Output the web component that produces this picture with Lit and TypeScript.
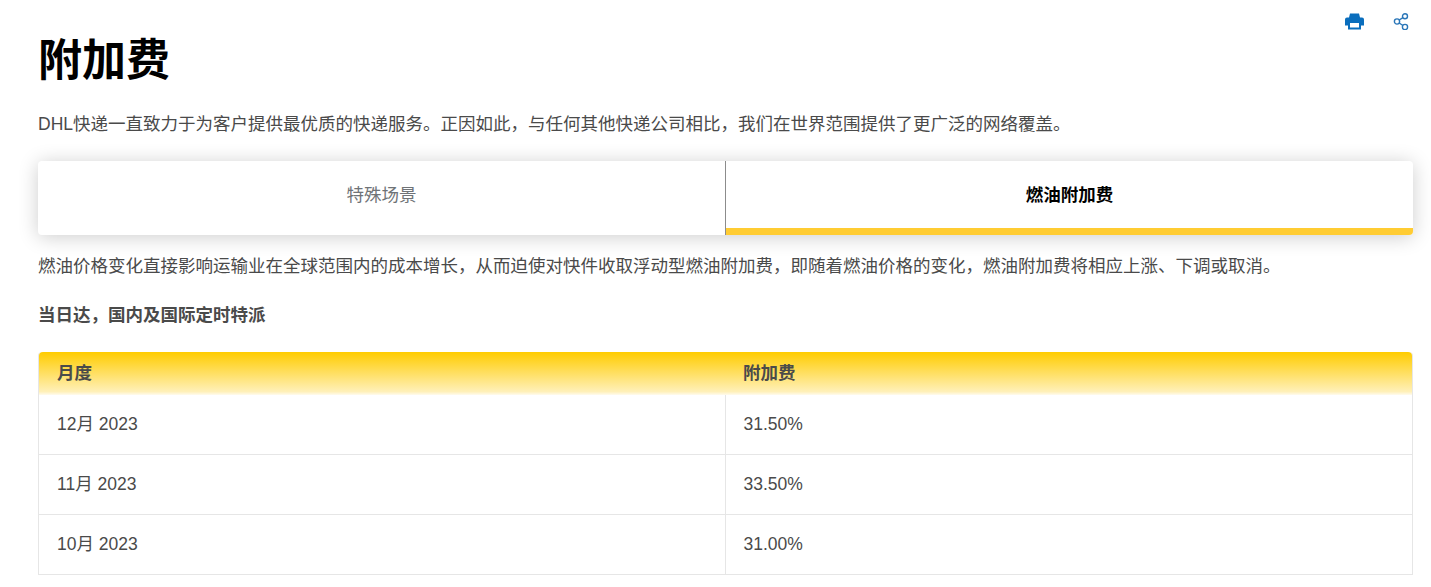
import { LitElement, html, css } from "lit";
import { customElement } from "lit/decorators.js";

const rows = [
  ["12月 2023", "31.50%"],
  ["11月 2023", "33.50%"],
  ["10月 2023", "31.00%"],
];

@customElement("app-root")
export class AppRoot extends LitElement {
  static styles = css`
    :host {
      display: block;
      height: 587px;
      overflow: hidden;
      box-sizing: border-box;
      padding: 0 18px 0 38px;
      font-family: "Liberation Sans", "Noto Sans CJK SC", sans-serif;
      font-size: 17.5px;
      line-height: 26px;
      color: #4a4a4a;
      background: #fff;
      position: relative;
    }
    .tools {
      position: absolute;
      top: 13px;
      left: 1345px;
      display: flex;
      gap: 29px;
      align-items: flex-start;
    }
    .tools svg { display: block; }
    h1 {
      margin: 0;
      padding-top: 33px;
      font-size: 44px;
      line-height: 56px;
      font-weight: 700;
      color: #000;
    }
    .intro {
      margin: 22px 0 0;
    }
    .tabs {
      margin-top: 24px;
      height: 74px;
      display: grid;
      grid-template-columns: 688px 1fr;
      border-radius: 4px;
      background: #fff;
      box-shadow: 0 2px 20px rgba(0, 0, 0, 0.2);
      overflow: hidden;
    }
    .tab {
      display: flex;
      align-items: center;
      justify-content: center;
      box-sizing: border-box;
      padding-bottom: 6px;
    }
    .tab.off { color: #6f7377; border-right: 1px solid #8c8c8c; }
    .tab.on {
      color: #000;
      font-weight: 700;
      border-bottom: 7px solid #ffcc33;
      padding-bottom: 0;
    }
    .desc {
      margin: 18px 0 0;
    }
    .sub {
      margin: 23px 0 0;
      font-weight: 700;
    }
    .table {
      margin-top: 24px;
      border-left: 1px solid #e6e6e6;
      border-right: 1px solid #e6e6e6;
      border-radius: 4px 4px 0 0;
    }
    .row {
      display: grid;
      grid-template-columns: 687px 1fr;
      height: 60px;
      border-bottom: 1px solid #e6e6e6;
      box-sizing: border-box;
    }
    .row > div {
      display: flex;
      align-items: center;
      padding: 0 0 1px 18px;
    }
    .row > div:first-child { border-right: 1px solid #e6e6e6; }
    .row > div:last-child { padding-left: 17.5px; }
    .head {
      display: grid;
      grid-template-columns: 687px 1fr;
      height: 43px;
      border-radius: 4px 4px 0 0;
      background: linear-gradient(180deg, #ffcc00 0%, #fff0b8 92%, #fffbee 100%);
      font-weight: 700;
    }
    .head > div {
      display: flex;
      align-items: center;
      padding: 0 0 1px 18px;
    }
    .head > div:last-child { padding-left: 17px; }
  `;

  render() {
    return html`
      <div class="tools">
        <svg width="19" height="17" viewBox="0 0 19 17" aria-hidden="true">
          <path fill="#0a6ebd" d="M5 0.500h9l1 4h2a2 2 0 0 1 2 2v6h-3v-2.500H3V12.500H0v-6a2 2 0 0 1 2-2h2z" />
          <path fill="none" stroke="#0a6ebd" stroke-width="2" d="M4 8h11v7.500H4z" />
        </svg>
        <svg width="16" height="17" viewBox="0 0 16 17" aria-hidden="true" fill="none" stroke="#2a76b8" stroke-width="1.400">
          <circle cx="4" cy="8.500" r="2.600" />
          <circle cx="12" cy="3.200" r="2.500" />
          <circle cx="12" cy="14" r="2.600" />
          <path d="M6.200 7 9.900 4.600M6.200 10l3.700 2.500" />
        </svg>
      </div>
      <h1>附加费</h1>
      <p class="intro">DHL快递一直致力于为客户提供最优质的快递服务。正因如此，与任何其他快递公司相比，我们在世界范围提供了更广泛的网络覆盖。</p>
      <div class="tabs">
        <div class="tab off">特殊场景</div>
        <div class="tab on">燃油附加费</div>
      </div>
      <p class="desc">燃油价格变化直接影响运输业在全球范围内的成本增长，从而迫使对快件收取浮动型燃油附加费，即随着燃油价格的变化，燃油附加费将相应上涨、下调或取消。</p>
      <p class="sub">当日达，国内及国际定时特派</p>
      <div class="table">
        <div class="head"><div>月度</div><div>附加费</div></div>
        ${rows.map(
          (r) => html`<div class="row"><div>${r[0]}</div><div>${r[1]}</div></div>`
        )}
      </div>
    `;
  }
}
